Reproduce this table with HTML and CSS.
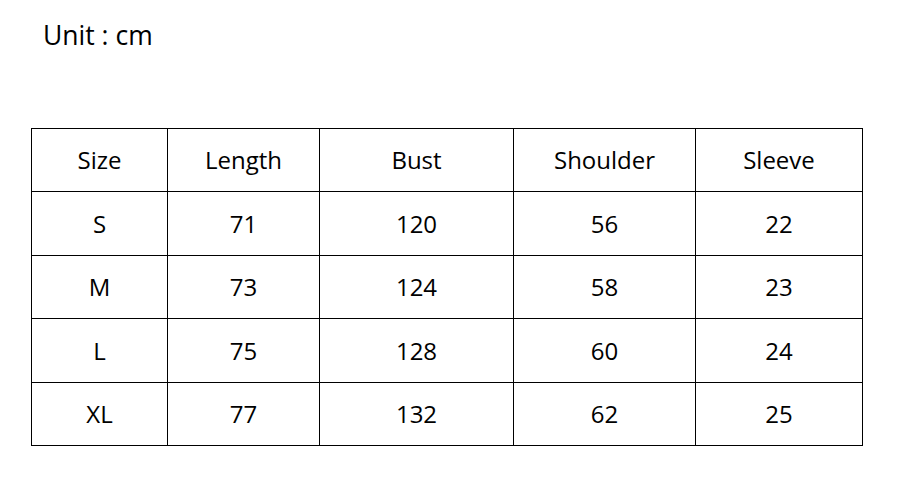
FILE: index.html
```html
<!DOCTYPE html>
<html>
<head>
<meta charset="utf-8">
<link rel="stylesheet" href="styles.css">
</head>
<body>
<div class="page">
  <div class="unit">Unit : cm</div>
  <table class="size-table">
    <colgroup>
      <col class="c1"><col class="c2"><col class="c3"><col class="c4"><col class="c5">
    </colgroup>
    <tr class="r-a"><td>Size</td><td>Length</td><td>Bust</td><td>Shoulder</td><td>Sleeve</td></tr>
    <tr class="r-b"><td>S</td><td>71</td><td>120</td><td>56</td><td>22</td></tr>
    <tr class="r-a"><td>M</td><td>73</td><td>124</td><td>58</td><td>23</td></tr>
    <tr class="r-b"><td>L</td><td>75</td><td>128</td><td>60</td><td>24</td></tr>
    <tr class="r-a"><td>XL</td><td>77</td><td>132</td><td>62</td><td>25</td></tr>
  </table>
</div>
</body>
</html>
```
FILE: styles.css
```css
html, body {
  margin: 0;
  padding: 0;
  background: #ffffff;
}
.page {
  padding: 17px 0 0 31px;
  font-family: "Open Sans", sans-serif;
  color: #000000;
}
.unit {
  padding-left: 12px;
  font-size: 26.5px;
  line-height: 36px;
  height: 36px;
}
.size-table {
  margin-top: 75px;
  border-collapse: collapse;
  table-layout: fixed;
  width: 831px;
  font-size: 24px;
}
.c1 { width: 136px; }
.c2 { width: 152px; }
.c3 { width: 194px; }
.c4 { width: 182px; }
.c5 { width: 167px; }
.size-table td {
  border: 1px solid #000000;
  text-align: center;
  vertical-align: middle;
  padding: 0;
  line-height: 30px;
}
.r-a td { height: 62px; }
.r-b td { height: 63px; }
```
